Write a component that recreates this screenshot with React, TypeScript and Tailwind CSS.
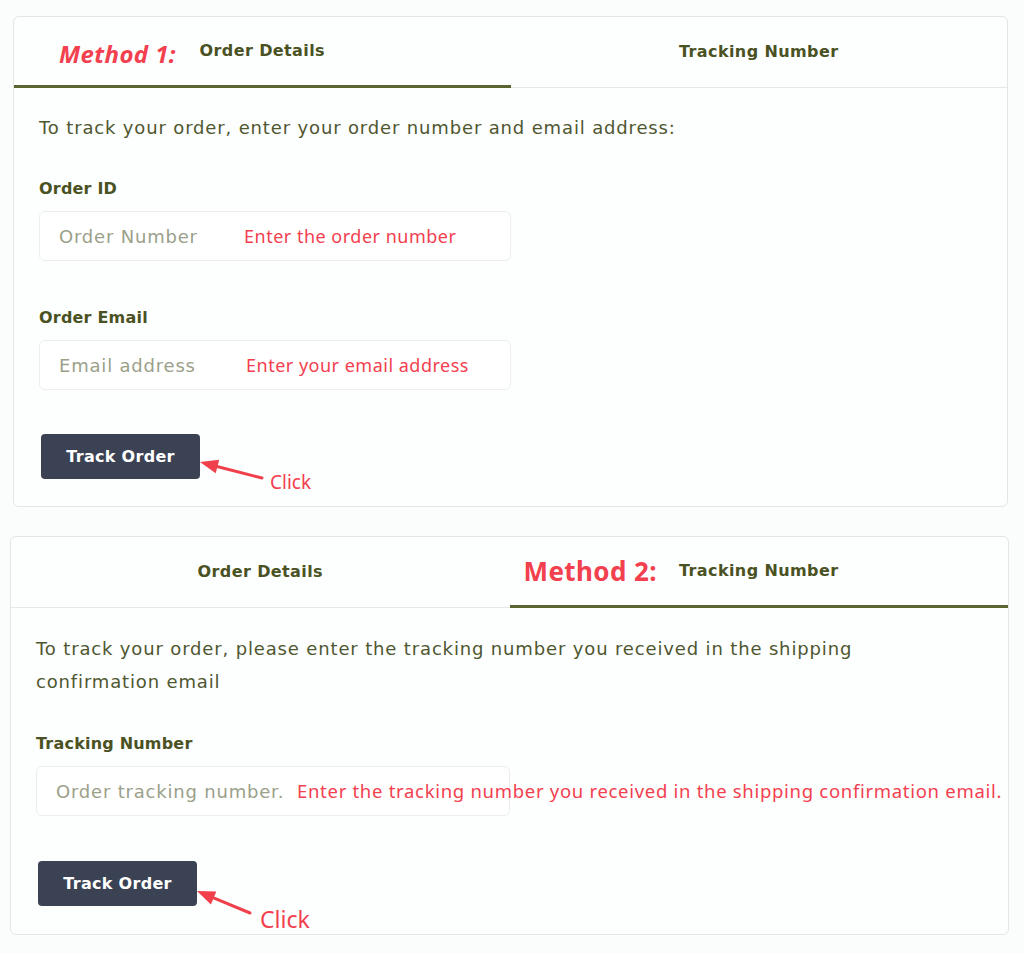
import React from 'react';

const body = { fontFamily: '"DejaVu Sans", "Open Sans", sans-serif' };
const note = { fontFamily: '"Noto Sans", "Open Sans", sans-serif' };

const Arrow1 = () => (
  <svg className="absolute left-[155px] top-[18px]" width="70" height="32" viewBox="0 0 70 32">
    <line x1="21" y1="14.5" x2="66" y2="26" stroke="#f0404c" strokeWidth="3" strokeLinecap="round" />
    <polygon points="4,10 19.7,21.3 23.2,7.7" fill="#f0404c" />
  </svg>
);

const Arrow2 = () => (
  <svg className="absolute left-[155px] top-[22px]" width="62" height="34" viewBox="0 0 62 34">
    <line x1="20" y1="14.7" x2="57" y2="30" stroke="#f0404c" strokeWidth="3" strokeLinecap="round" />
    <polygon points="4,8 17.9,21.4 23.3,8.4" fill="#f0404c" />
  </svg>
);

function Tabs({ active, method }: { active: 0 | 1; method: React.ReactNode }) {
  const tab = (label: string, i: 0 | 1) => (
    <div
      className={
        'relative flex h-[71px] items-center justify-center text-[16px] font-bold tracking-[0.4px] text-[#4a5223] ' +
        (active === i ? 'border-b-[3px] border-[#5b6532]' : 'border-b border-[#e6e8e8]')
      }
    >
      {active === i && method}
      <span>{label}</span>
    </div>
  );
  return (
    <div className="grid grid-cols-2">
      {tab('Order Details', 0)}
      {tab('Tracking Number', 1)}
    </div>
  );
}

function Field({
  placeholder,
  hint,
  hintClass,
  width,
}: {
  placeholder: string;
  hint: string;
  hintClass: string;
  width: string;
}) {
  return (
    <div className={'relative flex h-[50px] items-center rounded-md border border-[#eceeee] bg-white pl-[19px] ' + width}>
      <span className="text-[18px] tracking-[0.8px] text-[#9ba089]">{placeholder}</span>
      <span className={'absolute whitespace-nowrap text-[#f3404f] ' + hintClass} style={note}>
        {hint}
      </span>
    </div>
  );
}

function Button() {
  return (
    <button className="h-[45px] w-[159px] rounded-[4px] bg-[#3a4254] text-[16px] font-bold tracking-[0.3px] text-white">
      Track Order
    </button>
  );
}

const label = 'text-[16px] font-bold tracking-[0.2px] leading-[24px] text-[#4a5223]';

export default function App() {
  return (
    <div className="min-h-[953px] w-[1024px] bg-[#fbfcfc] pt-[16px] pb-[18px]" style={body}>
      <div className="ml-[13px] w-[995px] overflow-hidden rounded-md border border-[#e4e6e6] bg-[#fdfefe]">
        <Tabs
          active={0}
          method={
            <span className="absolute left-[45px] top-[19px] text-[24px] font-bold italic text-[#f2404e]" style={note}>
              Method 1:
            </span>
          }
        />
        <div className="px-[25px] pb-[27px]">
          <p className="mt-[26px] text-[18px] leading-[28px] tracking-[0.85px] text-[#4f5730]">
            To track your order, enter your order number and email address:
          </p>
          <div className={'mt-[35px] ' + label}>Order ID</div>
          <div className="mt-[10px]">
            <Field
              placeholder="Order Number"
              hint="Enter the order number"
              hintClass="left-[204px] text-[18px] tracking-[0.5px]"
              width="w-[472px]"
            />
          </div>
          <div className={'mt-[45px] ' + label}>Order Email</div>
          <div className="mt-[10px]">
            <Field
              placeholder="Email address"
              hint="Enter your email address"
              hintClass="left-[206px] text-[18px] tracking-[0.5px]"
              width="w-[472px]"
            />
          </div>
          <div className="relative ml-[2px] mt-[44px] h-[45px]">
            <Button />
            <Arrow1 />
            <span className="absolute left-[229px] top-[34px] text-[19px] text-[#f3404f]" style={note}>
              Click
            </span>
          </div>
        </div>
      </div>

      <div className="ml-[10px] mt-[29px] w-[999px] overflow-hidden rounded-md border border-[#e4e6e6] bg-[#fdfefe]">
        <Tabs
          active={1}
          method={
            <span className="absolute left-[14px] top-[15px] text-[26px] font-bold text-[#f2404e]" style={note}>
              Method 2:
            </span>
          }
        />
        <div className="px-[25px] pb-[27px]">
          <p className="mt-[24px] text-[18px] leading-[33px] tracking-[0.85px] text-[#4f5730]">
            To track your order, please enter the tracking number you received in the shipping
            <br />
            confirmation email
          </p>
          <div className={'mt-[34px] ' + label}>Tracking Number</div>
          <div className="mt-[10px]">
            <Field
              placeholder="Order tracking number."
              hint="Enter the tracking number you received in the shipping confirmation email."
              hintClass="left-[260px] text-[18.5px] tracking-[0.7px]"
              width="w-[474px]"
            />
          </div>
          <div className="relative ml-[2px] mt-[45px] h-[46px]">
            <Button />
            <Arrow2 />
            <span className="absolute left-[222px] top-[41px] text-[23px] text-[#f3404f]" style={note}>
              Click
            </span>
          </div>
        </div>
      </div>
    </div>
  );
}
